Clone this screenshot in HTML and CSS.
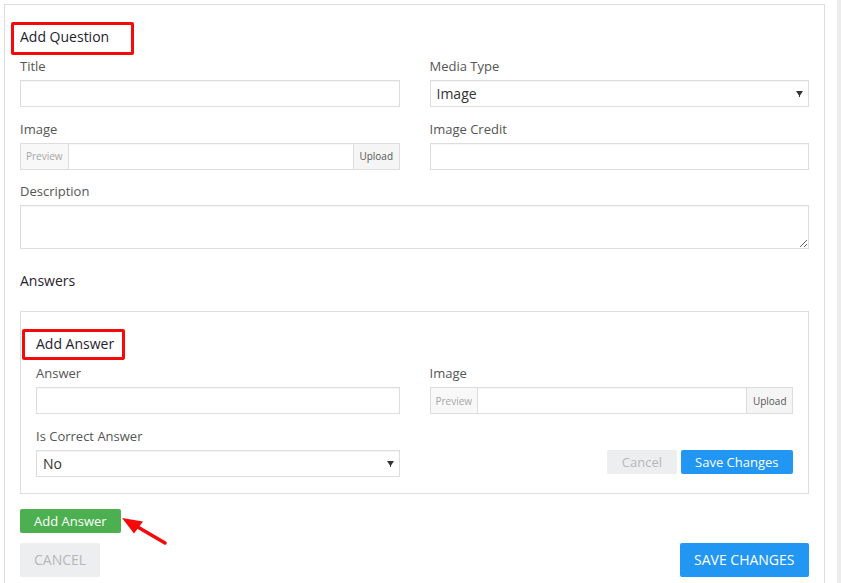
FILE: index.html
```html
<!DOCTYPE html>
<html lang="en">
<head>
<meta charset="utf-8">
<title>Add Question</title>
<link rel="stylesheet" href="styles.css">
</head>
<body>
<div class="page">
  <div class="panel">
    <h3 class="heading mark mark-question">Add Question</h3>
    <div class="row">
      <div class="field"><label>Title</label><input class="control" type="text"></div>
      <div class="field"><label>Media Type</label>
        <div class="select-wrap">
          <select class="control select"><option>Image</option></select>
          <svg class="caret" width="7" height="6" viewBox="0 0 7 6"><path d="M0 0H7L4 4.5V6H3V4.5Z" fill="#333"/></svg>
        </div>
      </div>
    </div>
    <div class="row">
      <div class="field"><label>Image</label>
        <div class="input-group">
          <span class="addon addon-preview">Preview</span>
          <input class="group-input" type="text">
          <span class="addon addon-upload">Upload</span>
        </div>
      </div>
      <div class="field"><label>Image Credit</label><input class="control" type="text"></div>
    </div>
    <div class="row single last">
      <div class="field"><label>Description</label><textarea class="control textarea"></textarea></div>
    </div>

    <h3 class="heading section-title">Answers</h3>

    <div class="subpanel">
      <h3 class="heading mark mark-answer">Add Answer</h3>
      <div class="row">
        <div class="field"><label>Answer</label><input class="control" type="text"></div>
        <div class="field"><label>Image</label>
          <div class="input-group">
            <span class="addon addon-preview">Preview</span>
            <input class="group-input" type="text">
            <span class="addon addon-upload">Upload</span>
          </div>
        </div>
      </div>
      <div class="row last">
        <div class="field"><label>Is Correct Answer</label>
          <div class="select-wrap">
            <select class="control select"><option>No</option></select>
            <svg class="caret" width="7" height="6" viewBox="0 0 7 6"><path d="M0 0H7L4 4.5V6H3V4.5Z" fill="#333"/></svg>
          </div>
        </div>
        <div class="field"><label>&nbsp;</label>
          <div class="btn-row">
            <button class="btn btn-light">Cancel</button>
            <button class="btn btn-primary">Save Changes</button>
          </div>
        </div>
      </div>
    </div>

    <div class="add-row">
      <button class="btn btn-success">Add Answer</button>
      <svg class="pointer" width="50" height="36" viewBox="0 0 50 36">
        <line x1="16" y1="12" x2="45" y2="29" stroke="#f50a0a" stroke-width="3.5" stroke-linecap="round"/>
        <path d="M2 4L23 7.5L14 19.5Z" fill="#f50a0a"/>
      </svg>
    </div>

    <div class="footer-actions">
      <button class="btn btn-lg btn-light">Cancel</button>
      <button class="btn btn-lg btn-primary">Save Changes</button>
    </div>
  </div>
  <div class="strip"></div>
</div>
</body>
</html>
```

FILE: styles.css
```css
html, body {
  margin: 0;
  padding: 0;
  background: #fff;
}

body {
  font-family: "Open Sans", "Liberation Sans", sans-serif;
  color: #333;
}

.page {
  display: flex;
  align-items: stretch;
  min-height: 100vh;
}

.panel {
  box-sizing: border-box;
  width: 821px;
  margin: 4px 0 0 4px;
  border: 1px solid #ddd;
  border-bottom: none;
  padding: 21.5px 15px 40px;
}

.strip {
  flex: 1;
  margin-left: 12px;
  background: #ececec;
}

.heading {
  position: relative;
  margin: 0 0 10.5px;
  font-size: 14px;
  line-height: 20px;
  font-weight: 400;
  color: #1f2230;
}

.mark::after {
  content: "";
  position: absolute;
  box-sizing: border-box;
  border: 3px solid #f50a0a;
  border-radius: 2px;
  pointer-events: none;
}

.mark-question::after {
  left: -9px;
  top: -4.5px;
  width: 123px;
  height: 32.5px;
}

.mark-answer::after {
  left: -14px;
  top: -4.5px;
  width: 103px;
  height: 30.5px;
}

.section-title {
  margin: 21.5px 0 20.5px;
}

.row {
  display: grid;
  grid-template-columns: 1fr 1fr;
  column-gap: 30px;
  margin-bottom: 12.5px;
}

.row.single {
  grid-template-columns: 1fr;
}

.row.last {
  margin-bottom: 0;
}

.field label {
  display: block;
  margin-bottom: 5px;
  font-size: 13px;
  line-height: 18px;
  color: #555;
}

.control {
  display: block;
  box-sizing: border-box;
  width: 100%;
  height: 27px;
  margin: 0;
  padding: 0 6px;
  border: 1px solid #ddd;
  border-radius: 0;
  background: #fff;
  box-shadow: inset 0 1px 1px rgba(0, 0, 0, 0.04);
  font-family: "Open Sans", "Liberation Sans", sans-serif;
  font-size: 14px;
  color: #333;
  outline: none;
}

.textarea {
  height: 44px;
  resize: both;
  padding: 6px;
}

.select-wrap {
  position: relative;
}

.select {
  appearance: none;
  -webkit-appearance: none;
  line-height: 25px;
}

.caret {
  position: absolute;
  right: 6px;
  top: 11px;
}

.input-group {
  display: flex;
  box-sizing: border-box;
  height: 27px;
  border: 1px solid #ddd;
  box-shadow: inset 0 1px 1px rgba(0, 0, 0, 0.04);
}

.addon {
  display: flex;
  align-items: center;
  padding: 0 5px;
  font-size: 10px;
  background: #f8f8f8;
}

.addon-preview {
  color: #a6a6a6;
  border-right: 1px solid #ddd;
}

.addon-upload {
  color: #555;
  padding: 0 5.5px;
  border-left: 1px solid #ddd;
  background: #f5f5f5;
}

.group-input {
  flex: 1;
  min-width: 0;
  border: none;
  margin: 0;
  padding: 0 6px;
  background: transparent;
  outline: none;
}

.subpanel {
  border: 1px solid #ddd;
  padding: 21.5px 15px 16px;
}

.btn-row {
  display: flex;
  justify-content: flex-end;
  gap: 4px;
}

.btn {
  height: 24px;
  margin: 0;
  padding: 0 14.5px;
  border: none;
  border-radius: 2px;
  font-family: "Open Sans", "Liberation Sans", sans-serif;
  font-size: 13px;
  line-height: 24px;
  cursor: pointer;
}

.btn-primary {
  background: #2196f3;
  color: #fff;
}

.btn-light {
  background: #eceeef;
  color: #b8b8b8;
}

.btn-success {
  background: #4caf50;
  color: #fff;
  padding: 0 14px;
}

.add-row {
  position: relative;
  margin-top: 15px;
}

.pointer {
  position: absolute;
  left: 100px;
  top: 5px;
}

.footer-actions {
  display: flex;
  justify-content: space-between;
  margin-top: 10px;
}

.btn-lg {
  height: 34px;
  padding: 0 14px;
  font-size: 14px;
  line-height: 34px;
  text-transform: uppercase;
}

.footer-actions .btn-primary {
  padding: 0 14.5px;
}
```
